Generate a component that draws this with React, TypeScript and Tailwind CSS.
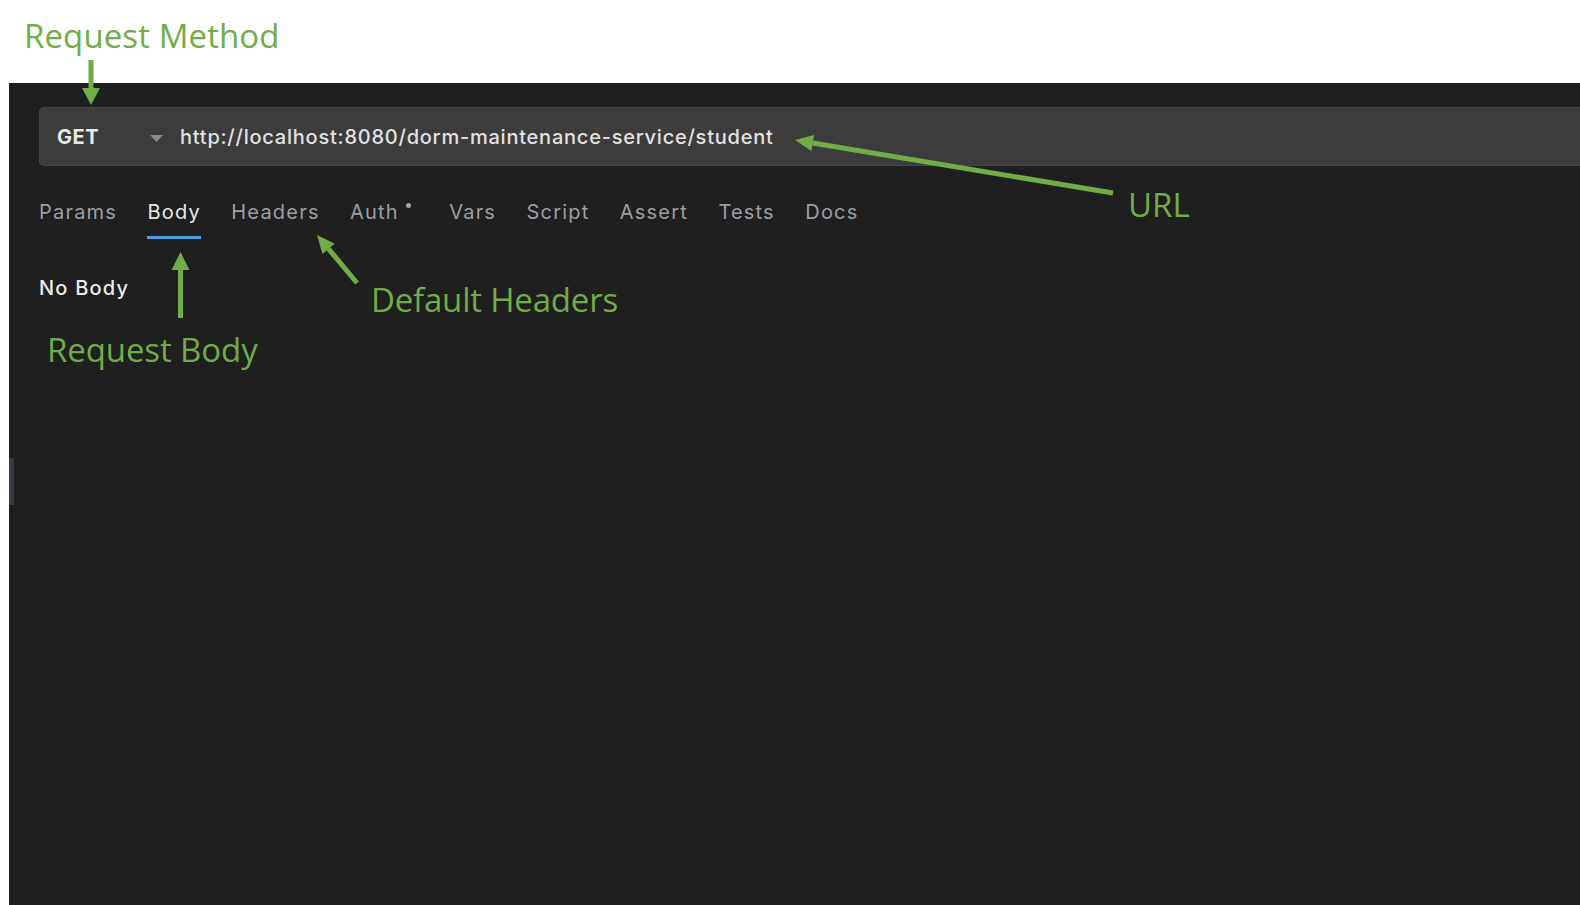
const tabs = ['Params', 'Body', 'Headers', 'Auth', 'Vars', 'Script', 'Assert', 'Tests', 'Docs'];

function Callouts() {
  return (
    <>
      <svg className="pointer-events-none absolute inset-0" width="1580" height="905" viewBox="0 0 1580 905">
        <g stroke="#70ad47" strokeWidth="5" fill="none">
          <line x1="91" y1="60" x2="91" y2="90" />
          <line x1="1113" y1="193" x2="812.7" y2="143" />
          <line x1="357" y1="283" x2="328.5" y2="248.8" />
          <line x1="180.5" y1="318" x2="180.5" y2="268" />
        </g>
        <g fill="#70ad47">
          <polygon points="82,88 100,88 91,105" />
          <polygon points="795,140 814.1,135.1 811.4,150.9" />
          <polygon points="317,235 334.7,243.7 322.4,254" />
          <polygon points="171.5,270 189.5,270 180.5,252" />
        </g>
      </svg>
      <div className="pointer-events-none absolute inset-0 font-['Open_Sans',sans-serif] text-[33px] leading-[33px] text-[#70ad47]">
        <span className="absolute left-[24px] top-[19px] whitespace-nowrap tracking-[0.1px]">Request Method</span>
        <span className="absolute left-[1128px] top-[188px] whitespace-nowrap">URL</span>
        <span className="absolute left-[371px] top-[283px] whitespace-nowrap tracking-[-0.2px]">Default Headers</span>
        <span className="absolute left-[47px] top-[333px] whitespace-nowrap tracking-[-0.1px]">Request Body</span>
      </div>
    </>
  );
}

export default function App() {
  return (
    <div className="relative h-[905px] w-[1580px] overflow-hidden bg-white font-['Inter',sans-serif]">
      <div className="h-[83px]" />

      {/* request pane */}
      <div className="relative ml-[9px] h-[822px] bg-[#1f1f1f] pl-[30px] pt-[24px]">
        <div className="absolute left-0 top-[375px] h-[47px] w-[5px] bg-[#3a3a44]" />

        {/* method + url */}
        <div className="flex h-[59px] items-center rounded-l-[5px] border border-r-0 border-[#454545] bg-[#3c3c3c] pl-[17px]">
          <span className="w-[93px] text-[20px] font-bold leading-[20px] tracking-[0.5px] text-[#e8e8e8]">GET</span>
          <svg width="13" height="7" viewBox="0 0 13 7" className="mt-[4px]">
            <path d="M0 0h13L6.5 7z" fill="#8a8a8a" />
          </svg>
          <span className="ml-[17px] whitespace-nowrap text-[20px] font-medium leading-[20px] tracking-[0.77px] text-[#e2e2e2]">
            http://localhost:8080/dorm-maintenance-service/student
          </span>
        </div>

        {/* tabs */}
        <div className="mt-[36px] flex gap-[30.4px]">
          {tabs.map((t) => (
            <div key={t} className="flex flex-col">
              <div className="flex items-start">
                <span
                  className={
                    t === 'Body'
                      ? 'whitespace-nowrap text-[20px] leading-[20px] tracking-[1.2px] text-[#e6e6e6]'
                      : 'whitespace-nowrap text-[20px] leading-[20px] tracking-[1.2px] text-[#9b9fa4]'
                  }
                >
                  {t}
                </span>
                {t === 'Auth' && <span className="ml-[7px] mr-[8px] mt-[1px] h-[5px] w-[5px] rounded-full bg-[#a3a3a3]" />}
              </div>
              <div className={t === 'Body' ? 'mt-[14px] h-[3px] bg-[#4f9de0]' : 'mt-[14px] h-[3px]'} />
            </div>
          ))}
        </div>

        <div className="mt-[39px] text-[20px] font-medium leading-[20px] tracking-[1.2px] text-[#ececec]">No Body</div>
      </div>

      <Callouts />
    </div>
  );
}
